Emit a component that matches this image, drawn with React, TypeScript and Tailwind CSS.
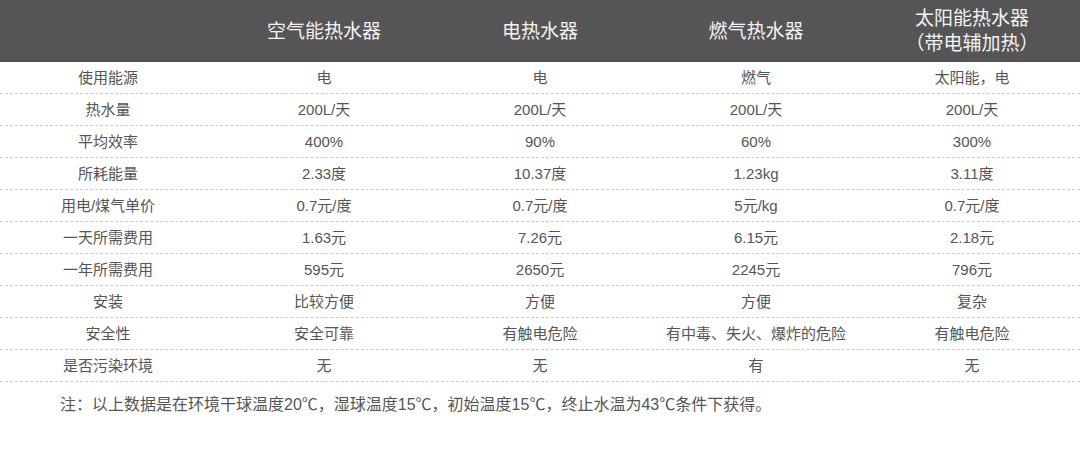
import React from "react";

const rows: string[][] = [
  ["使用能源", "电", "电", "燃气", "太阳能，电"],
  ["热水量", "200L/天", "200L/天", "200L/天", "200L/天"],
  ["平均效率", "400%", "90%", "60%", "300%"],
  ["所耗能量", "2.33度", "10.37度", "1.23kg", "3.11度"],
  ["用电/煤气单价", "0.7元/度", "0.7元/度", "5元/kg", "0.7元/度"],
  ["一天所需费用", "1.63元", "7.26元", "6.15元", "2.18元"],
  ["一年所需费用", "595元", "2650元", "2245元", "796元"],
  ["安装", "比较方便", "方便", "方便", "复杂"],
  ["安全性", "安全可靠", "有触电危险", "有中毒、失火、爆炸的危险", "有触电危险"],
  ["是否污染环境", "无", "无", "有", "无"],
];

export default function App() {
  return (
    <div
      className="w-[1080px] h-[457px] bg-white text-[#555]"
      style={{ fontFamily: '"Liberation Sans", "Noto Sans CJK SC", sans-serif' }}
    >
      <div className="grid grid-cols-5 h-[62px] bg-[#555555] text-[#f3f3f3] text-[19px] leading-[25px]">
        <div />
        <div className="flex items-center justify-center">空气能热水器</div>
        <div className="flex items-center justify-center">电热水器</div>
        <div className="flex items-center justify-center">燃气热水器</div>
        <div className="flex flex-col items-center justify-center">
          <span>太阳能热水器</span>
          <span>（带电辅加热）</span>
        </div>
      </div>
      {rows.map((r, i) => (
        <div
          key={i}
          className="grid grid-cols-5 h-[32px] border-b border-dashed border-[#cccccc] text-[15px]"
        >
          {r.map((c, j) => (
            <div key={j} className="flex items-center justify-center pt-[1px]">
              {c}
            </div>
          ))}
        </div>
      ))}
      <div className="pl-[60px] pt-[13px] text-[16px] leading-[20px] text-[#555]">
        注：以上数据是在环境干球温度20℃，湿球温度15℃，初始温度15℃，终止水温为43℃条件下获得。
      </div>
    </div>
  );
}
